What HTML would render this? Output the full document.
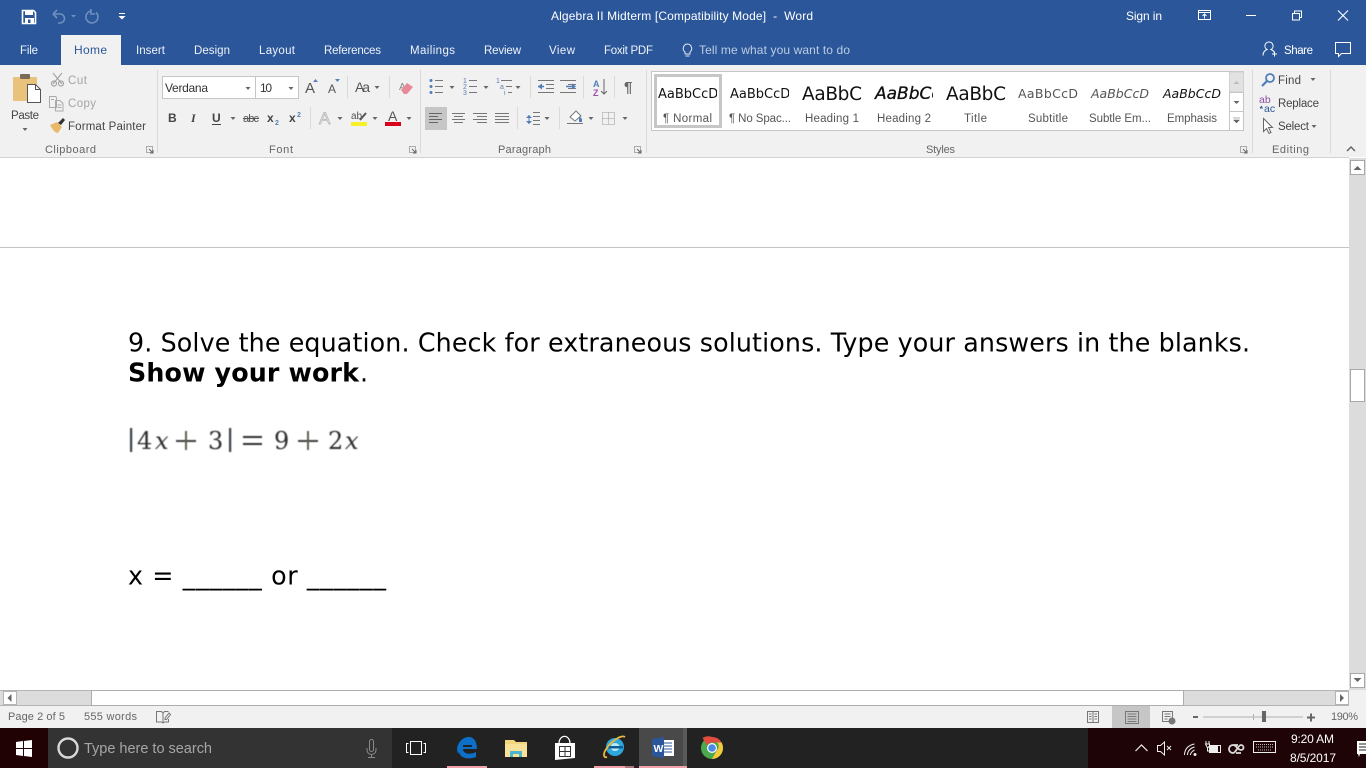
<!DOCTYPE html>
<html>
<head>
<meta charset="utf-8">
<title>Algebra II Midterm</title>
<style>
html,body{margin:0;padding:0;background:#fff;overflow:hidden}
svg{display:block;position:absolute;left:0;top:0}
text{font-family:"Liberation Sans",sans-serif;font-size:12px;white-space:pre}
.w{fill:#fff}
.tb{fill:#eef2f8;font-size:11.5px}
.r{fill:#444;font-size:11.5px}
.g{fill:#a5a5a5;font-size:11.5px}
.l{fill:#666;font-size:11px}
.c{fill:#555;font-size:11.5px;text-anchor:start}
.d{font-family:"DejaVu Sans","Liberation Sans",sans-serif;font-size:25.33px;fill:#000}
.s{font-family:"DejaVu Sans","Liberation Sans",sans-serif;fill:#111}
.st{fill:#666;font-size:11px}
.m{font-family:"DejaVu Serif","Liberation Serif",serif;font-size:24px;fill:#2e2e2e}
.mi{font-family:"DejaVu Serif","Liberation Serif",serif;font-size:24px;font-style:italic;fill:#2e2e2e}
</style>
</head>
<body>
<svg width="1366" height="768" viewBox="0 0 1366 768" xmlns="http://www.w3.org/2000/svg">
<defs>
<filter id="b" x="-5%" y="-20%" width="110%" height="140%"><feGaussianBlur stdDeviation="0.5"/></filter>
<g id="dd"><path d="M-2.5 0h5L0 3z" fill="#666"/></g>
<g id="dl"><path d="M1.500 1.500h6v6h-6z" fill="none" stroke="#aaa"/><path d="M4 4l3.500 3.500M8 5v3H5" fill="none" stroke="#666"/></g>
<clipPath id="c1"><rect x="656" y="80" width="61" height="26"/></clipPath>
<clipPath id="c2"><rect x="728" y="80" width="61" height="26"/></clipPath>
<clipPath id="c3"><rect x="872" y="80" width="61" height="26"/></clipPath>
<clipPath id="c4"><rect x="1089" y="80" width="60" height="26"/></clipPath>
<clipPath id="c5"><rect x="1161" y="80" width="60" height="26"/></clipPath>
</defs>

<!-- title bar -->
<rect width="1366" height="65" fill="#2b579a"/>
<g>
<path d="M22.5 10.5h11l2 2v11h-13z" fill="none" stroke="#fff" stroke-width="1.6"/>
<rect x="25" y="10" width="8" height="5" fill="#fff"/>
<rect x="25" y="18" width="9" height="5" fill="#fff"/>
<rect x="28" y="19.5" width="2.5" height="3.5" fill="#2b579a"/>
<path d="M53 14l4-4M53 14l4 4M53 14h7a4.5 4.5 0 0 1 0 9h-2" fill="none" stroke="#6f8fbf" stroke-width="1.6"/>
<path d="M71 15h5l-2.500 2.500z" fill="#6f8fbf"/>
<path d="M91 11a6 6 0 1 0 5 1.500M91 9v5h4" fill="none" stroke="#6f8fbf" stroke-width="1.600"/>
<rect x="119" y="13" width="6" height="1" fill="#fff"/>
<path d="M118.500 16h7l-3.500 3.500z" fill="#fff"/>
</g>
<text x="551" y="20" class="w" textLength="262">Algebra II Midterm [Compatibility Mode]  -  Word</text>
<text x="1126" y="20" class="w" textLength="36">Sign in</text>
<g fill="none" stroke="#fff">
<path d="M1198.500 10.500h12v9h-12zM1198.500 12.500h12"/>
<path d="M1204.500 18.500v-4M1202.500 16l2-2 2 2"/>
<path d="M1246 15.500h10"/>
<path d="M1292.500 13.500h7v6.500h-7zM1294.500 13v-2h7v6.500h-1.500"/>
<path d="M1338 10.500l10 10M1348 10.500l-10 10" stroke-width="1.100"/>
</g>

<!-- tabs -->
<rect x="61" y="35" width="60" height="30" fill="#f1f1f1"/>
<text x="20" y="54" class="tb" textLength="18">File</text>
<text x="74" y="54" fill="#2b579a" textLength="33">Home</text>
<text x="136" y="54" class="tb" textLength="29">Insert</text>
<text x="194" y="54" class="tb" textLength="36">Design</text>
<text x="259" y="54" class="tb" textLength="36">Layout</text>
<text x="324" y="54" class="tb" textLength="57">References</text>
<text x="410" y="54" class="tb" textLength="45">Mailings</text>
<text x="484" y="54" class="tb" textLength="37">Review</text>
<text x="549" y="54" class="tb" textLength="26">View</text>
<text x="604" y="54" class="tb" textLength="49">Foxit PDF</text>
<path d="M687 44a4.500 4.500 0 0 1 3 8v2h-5v-2a4.500 4.500 0 0 1 2-8zM685.500 56h4" fill="none" stroke="#dfe7f2"/>
<text x="699" y="54" fill="#bccce2" textLength="151">Tell me what you want to do</text>
<path d="M1269 42a4 4 0 0 1 2 7.500c2 .8 3 2 3.500 3.500M1269 42a4 4 0 0 0-2 7.500c-2.500 1-4 3-4 6M1272 54h5M1274.500 51.500v5" fill="none" stroke="#fff"/>
<text x="1284" y="54" class="w" style="font-size:11.500px" textLength="29">Share</text>
<path d="M1335.500 42.500h15v11h-9l-3 3v-3h-3z" fill="none" stroke="#fff"/>

<!-- ribbon -->
<rect y="65" width="1366" height="92" fill="#f1f1f1"/>
<rect y="157" width="1349" height="1" fill="#d2d2d2"/>
<g fill="#dadada">
<rect x="157" y="70" width="1" height="83"/><rect x="420" y="70" width="1" height="83"/><rect x="646" y="70" width="1" height="83"/><rect x="1252" y="70" width="1" height="83"/><rect x="1330" y="70" width="1" height="83"/>
<rect x="347" y="76" width="1" height="22"/><rect x="389" y="76" width="1" height="22"/><rect x="310" y="107" width="1" height="22"/>
<rect x="530" y="76" width="1" height="22"/><rect x="583" y="76" width="1" height="22"/><rect x="614" y="76" width="1" height="22"/>
<rect x="517" y="107" width="1" height="22"/><rect x="559" y="107" width="1" height="22"/>
</g>

<!-- clipboard -->
<rect x="13" y="77" width="24" height="24" rx="1" fill="#e9c27b"/>
<rect x="20" y="74" width="10" height="5" rx="1" fill="#7b6a55"/>
<path d="M27.500 84.500h8l5 5v13h-13z" fill="#fff" stroke="#555"/>
<path d="M35.500 84.500v5h5" fill="none" stroke="#555"/>
<text x="11" y="119" class="r" textLength="28">Paste</text>
<use href="#dd" x="25" y="128"/>
<g fill="none" stroke="#a5a5a5" stroke-width="1.200"><path d="M53 73l9 11M62 73l-9 11"/><circle cx="54" cy="83.500" r="2.500"/><circle cx="61" cy="83.500" r="2.500"/></g>
<text x="68" y="84" class="g" textLength="19">Cut</text>
<g fill="none" stroke="#aaa"><path d="M49.500 96.500h6l1 1v10h-7zM55.500 100.500h4.500l3 3v7.500h-7.500v-10.500zM51 99.500h3M57.500 105h4M57.500 107.500h4"/></g>
<text x="68" y="107" class="g" textLength="28">Copy</text>
<path d="M50 125l7-3 5 5-4 6c-3 0-6-4-8-8z" fill="#e9b96a"/>
<path d="M58 123l5-5 2 2-4 5z" fill="#333"/>
<text x="68" y="130" class="r" textLength="78">Format Painter</text>
<text x="45" y="153" class="l" textLength="51">Clipboard</text>
<use href="#dl" x="145" y="145"/>

<!-- font -->
<rect x="162.500" y="76.500" width="93" height="22" fill="#fff" stroke="#c6c6c6"/>
<rect x="255.500" y="76.500" width="43" height="22" fill="#fff" stroke="#c6c6c6"/>
<text x="165" y="92" fill="#333" textLength="43">Verdana</text>
<use href="#dd" x="248" y="87"/>
<text x="260" y="92" fill="#333" textLength="12">10</text>
<use href="#dd" x="291" y="87"/>
<text x="305" y="93" fill="#555" style="font-size:15px" textLength="11">A</text>
<path d="M313 82h5l-2.500-3z" fill="#5b7fb5"/>
<text x="328" y="93" fill="#555" style="font-size:12px" textLength="9">A</text>
<path d="M335 79h5l-2.500 3z" fill="#5b7fb5"/>
<text x="355" y="92" fill="#555" style="font-size:14px" textLength="15">Aa</text>
<use href="#dd" x="377" y="86"/>
<text x="399" y="90" fill="#888" style="font-size:10px">A</text>
<path d="M401 90l6-7 6 4-6 7h-3z" fill="#e88a96"/>
<text x="168" y="122" fill="#444" style="font-size:12px;font-weight:bold" textLength="8">B</text>
<text x="191" y="122" fill="#444" style="font-size:12px;font-style:italic;font-family:'Liberation Serif',serif;font-weight:bold" textLength="6">I</text>
<text x="212" y="122" fill="#444" style="font-size:12px;font-weight:bold" textLength="9">U</text>
<rect x="212" y="124" width="9" height="1" fill="#444"/>
<use href="#dd" x="233" y="117"/>
<text x="243" y="122" fill="#555" style="font-size:11px" textLength="16">abc</text>
<rect x="243" y="118" width="16" height="1" fill="#555"/>
<text x="267" y="122" fill="#444" style="font-size:12px;font-weight:bold">x</text>
<text x="275" y="125" fill="#5b7fb5" style="font-size:7px;font-weight:bold">2</text>
<text x="289" y="122" fill="#444" style="font-size:12px;font-weight:bold">x</text>
<text x="297" y="117" fill="#5b7fb5" style="font-size:7px;font-weight:bold">2</text>
<text x="319" y="124" fill="#e4e4e4" stroke="#b4b4b4" stroke-width=".7" style="font-size:17px" textLength="14">A</text>
<use href="#dd" x="340" y="117"/>
<text x="351" y="119" fill="#555" style="font-size:10px">ab</text>
<path d="M360 120l6-7" stroke="#555" stroke-width="2"/>
<rect x="351" y="122" width="16" height="4" fill="#f7f028"/>
<use href="#dd" x="375" y="117"/>
<text x="388" y="121" fill="#555" style="font-size:14px" textLength="11">A</text>
<rect x="385" y="122" width="16" height="4" fill="#d9001b"/>
<use href="#dd" x="409" y="117"/>
<text x="269" y="153" class="l" textLength="24">Font</text>
<use href="#dl" x="408" y="145"/>

<!-- paragraph -->
<g fill="none" stroke="#777">
<path d="M435 80.500h8M435 86.500h8M435 92.500h8"/>
<path d="M469 80.500h8M469 86.500h8M469 92.500h8"/>
<path d="M501 80.500h11M506 86.500h6M508 92.500h4"/>
<path d="M538 80.500h16M546 84.500h8M546 88.500h8M538 92.500h16M560 80.500h16M568 84.500h8M568 88.500h8M560 92.500h16"/>
<path d="M452 113.500h13M454 116.500h9M452 119.500h13M454 122.500h9M473 113.500h14M477 116.500h10M473 119.500h14M477 122.500h10M495 113.500h14M495 116.500h14M495 119.500h14M495 122.500h14"/>
<path d="M533 112.500h7M533 116.500h7M533 120.500h7M533 124.500h7"/>
<path d="M602.500 112.500h12v12h-12zM608.500 112.500v12M602.500 118.500h12" stroke="#999" stroke-dasharray="1 1"/>
</g>
<rect x="425" y="107" width="22" height="23" fill="#c6c6c6"/>
<path d="M429 113.500h13M429 116.500h9M429 119.500h13M429 122.500h9" fill="none" stroke="#666"/>
<g fill="#4f7dba"><circle cx="431" cy="80.500" r="1.500"/><circle cx="431" cy="86.500" r="1.500"/><circle cx="431" cy="92.500" r="1.500"/>
<path d="M538 86.500l4-3v6zM576 86.500l-4-3v6z"/>
<path d="M529 115l-3 3h6zM529 124l-3-3h6z"/>
<rect x="528.500" y="115" width="1" height="9"/></g>
<path d="M538 86.500h6M566 86.500h6" stroke="#4f7dba" stroke-width="1.500"/>
<text x="463" y="83" fill="#5b7fb5" style="font-size:7px">1</text><text x="463" y="89" fill="#5b7fb5" style="font-size:7px">2</text><text x="463" y="95" fill="#5b7fb5" style="font-size:7px">3</text><text x="496" y="83" fill="#5b7fb5" style="font-size:7px">1</text><text x="500" y="89" fill="#5b7fb5" style="font-size:7px">a</text><text x="504" y="95" fill="#5b7fb5" style="font-size:7px">i</text>
<use href="#dd" x="452" y="86"/><use href="#dd" x="486" y="86"/><use href="#dd" x="518" y="86"/>
<text x="593" y="87" fill="#4f7dba" style="font-size:9px;font-weight:bold">A</text>
<text x="593" y="96" fill="#a04fa8" style="font-size:9px;font-weight:bold">Z</text>
<path d="M604 79v15M601 91l3 3 3-3" fill="none" stroke="#666"/>
<text x="624" y="92" fill="#666" style="font-size:15px;font-weight:bold" textLength="10">¶</text>
<use href="#dd" x="547" y="117"/>
<path d="M570 117l6-6 5 5-6 5zM567 123.500h16" fill="#fff" stroke="#777"/>
<path d="M579 116l3 3v3h-3z" fill="#4f7dba"/>
<use href="#dd" x="591" y="117"/><use href="#dd" x="625" y="117"/>
<text x="498" y="153" class="l" textLength="53">Paragraph</text>
<use href="#dl" x="633" y="145"/>

<!-- styles -->
<rect x="651.500" y="71.500" width="592" height="59" fill="#fff" stroke="#c6c6c6"/>
<rect x="655.500" y="75.500" width="65" height="51" fill="#fff" stroke="#c6c6c6" stroke-width="3"/>
<text x="658" y="98" class="s" style="font-size:13px" clip-path="url(#c1)">AaBbCcDc</text>
<text x="730" y="98" class="s" style="font-size:13px" clip-path="url(#c2)">AaBbCcDc</text>
<text x="802" y="100" class="s" style="font-size:18.500px" textLength="60">AaBbC</text>
<text x="875" y="99" class="s" style="font-size:17px;font-style:italic" stroke="#111" stroke-width=".3" clip-path="url(#c3)">AaBbCc</text>
<text x="946" y="100" class="s" style="font-size:18.500px" textLength="60">AaBbC</text>
<text x="1018" y="98" class="s" style="font-size:12.500px;fill:#555" textLength="60">AaBbCcD</text>
<text x="1091" y="98" class="s" style="font-size:12.500px;font-style:italic;fill:#555" clip-path="url(#c4)">AaBbCcDc</text>
<text x="1163" y="98" class="s" style="font-size:12.500px;font-style:italic" clip-path="url(#c5)">AaBbCcDc</text>
<text x="663" y="122" class="c" textLength="49">¶ Normal</text>
<text x="729" y="122" class="c" textLength="62">¶ No Spac...</text>
<text x="805" y="122" class="c" textLength="54">Heading 1</text>
<text x="877" y="122" class="c" textLength="54">Heading 2</text>
<text x="964" y="122" class="c" textLength="23">Title</text>
<text x="1028" y="122" class="c" textLength="40">Subtitle</text>
<text x="1089" y="122" class="c" textLength="62">Subtle Em...</text>
<text x="1167" y="122" class="c" textLength="50">Emphasis</text>
<rect x="1229.500" y="72" width="14" height="20" fill="#e2e2e2" stroke="#d0d0d0"/>
<path d="M1233.500 84h6l-3-3z" fill="#bbb"/>
<rect x="1229.500" y="92.500" width="14" height="19" fill="#fff" stroke="#c6c6c6"/>
<path d="M1233.500 101h6l-3 3z" fill="#666"/>
<rect x="1229.500" y="111.500" width="14" height="19" fill="#fff" stroke="#c6c6c6"/>
<path d="M1233 118h7M1233.500 120h6l-3 3z" fill="#666" stroke="#666" stroke-width=".5"/>
<text x="926" y="153" class="l" textLength="29">Styles</text>
<use href="#dl" x="1239" y="145"/>

<!-- editing -->
<circle cx="1270" cy="78" r="4" fill="none" stroke="#4f7dba" stroke-width="1.800"/>
<path d="M1267 81l-5 5" stroke="#4f7dba" stroke-width="2.200"/>
<text x="1278" y="84" class="r" textLength="23">Find</text>
<use href="#dd" x="1313" y="78"/>
<text x="1259" y="103" fill="#8a4fa0" style="font-size:10.500px">ab</text>
<text x="1264" y="112" fill="#2b579a" style="font-size:10.500px">ac</text>
<path d="M1260 108h3M1260 108l2-2" stroke="#2b579a" fill="none"/>
<text x="1278" y="107" class="r" textLength="41">Replace</text>
<path d="M1263.500 118.500v13l3-3 2.500 5 2-1-2.500-5h4z" fill="#fff" stroke="#666"/>
<text x="1278" y="130" class="r" textLength="31">Select</text>
<use href="#dd" x="1314" y="125"/>
<text x="1272" y="153" class="l" textLength="37">Editing</text>
<path d="M1347 151l4-4 4 4" fill="none" stroke="#666" stroke-width="1.500"/>

<!-- document -->
<rect y="158" width="1349" height="532" fill="#fff"/>
<rect y="247" width="1349" height="1" fill="#c4c4c4"/>
<text x="128" y="351.500" class="d" textLength="1122">9. Solve the equation. Check for extraneous solutions. Type your answers in the blanks.</text>
<text x="128" y="381.500" class="d" style="font-weight:bold" textLength="231">Show your work</text>
<text x="360" y="381.500" class="d">.</text>
<g filter="url(#b)">
<rect x="130" y="428" width="2.200" height="24" fill="#3a3f4a"/>
<text x="137" y="449" class="m">4</text>
<text x="155" y="449" class="mi">x</text>
<rect x="176" y="440" width="20" height="2" fill="#3c3c3c"/><rect x="185" y="431" width="2" height="19" fill="#5f5f50"/>
<text x="208" y="449" class="m">3</text>
<rect x="229" y="428" width="2.200" height="24" fill="#3a3f4a"/>
<rect x="243" y="436" width="19" height="2" fill="#2e2e2e"/><rect x="243" y="443" width="19" height="2" fill="#2e2e2e"/>
<text x="274" y="449" class="m">9</text>
<rect x="298" y="440" width="20" height="2" fill="#3c3c3c"/><rect x="307" y="431" width="2" height="19" fill="#5f5f50"/>
<text x="328" y="449" class="m">2</text>
<text x="345" y="449" class="mi">x</text>
</g>
<text x="128" y="584.500" class="d" textLength="258">x = ______ or ______</text>

<!-- vertical scrollbar -->
<rect x="1349" y="158" width="17" height="532" fill="#dcdcdc"/>
<rect x="1350.500" y="160.500" width="14" height="14" fill="#fff" stroke="#a8a8a8"/>
<path d="M1353.500 170h8l-4-4z" fill="#666"/>
<rect x="1350.500" y="369.500" width="14" height="32" fill="#fff" stroke="#a8a8a8"/>
<rect x="1350.500" y="673.500" width="14" height="14" fill="#fff" stroke="#a8a8a8"/>
<path d="M1353.500 678h8l-4 4z" fill="#666"/>

<!-- horizontal scrollbar -->
<rect y="690" width="1349" height="16" fill="#dcdcdc"/>
<rect y="690" width="1349" height="1" fill="#b4b4b4"/>
<rect y="705" width="1366" height="1" fill="#b4b4b4"/>
<rect x="1349" y="690" width="17" height="16" fill="#f1f1f1"/>
<rect x="3.500" y="691.500" width="13" height="13" fill="#fff" stroke="#b4b4b4"/>
<path d="M11.500 694l-4 4 4 4z" fill="#666"/>
<rect x="91.500" y="690.500" width="1092" height="15" fill="#fff" stroke="#adadad"/>
<rect x="1335.500" y="691.500" width="13" height="13" fill="#fff" stroke="#b4b4b4"/>
<path d="M1340 694l4 4-4 4z" fill="#666"/>

<!-- status bar -->
<rect y="706" width="1366" height="22" fill="#f1f1f1"/>
<text x="8" y="720" class="st" textLength="57">Page 2 of 5</text>
<text x="84" y="720" class="st" textLength="53">555 words</text>
<path d="M156.500 711.500h5l1.500 1.500v10l-1.500-1h-5zM163 713l1.500-1.500h4M163 723l1.500-1h4v-3" fill="none" stroke="#777"/>
<path d="M165 718l4-5 1.500 1.500-4 5h-1.500z" fill="none" stroke="#777"/>
<rect x="1112" y="706" width="38" height="22" fill="#c6c6c6"/>
<g fill="none" stroke="#777">
<path d="M1087.500 711.500h11v11h-11zM1093 711.500v11M1089 714h2.500M1089 716.500h2.500M1089 719h2.500M1094.500 714h2.500M1094.500 716.500h2.500M1094.500 719h2.500"/>
<path d="M1125.500 711.500h13v12h-13zM1127.500 714h9M1127.500 716.500h9M1127.500 719h9M1127.500 721.500h9"/>
<path d="M1162.500 711.500h10v10h-10zM1164.500 714h6M1164.500 716.500h6M1164.500 719h3"/>
</g>
<circle cx="1172" cy="721" r="3.500" fill="#777"/>
<rect x="1193" y="716" width="5" height="2" fill="#666"/>
<rect x="1203" y="716.500" width="100" height="1" fill="#b0b0b0"/>
<rect x="1253" y="714" width="1" height="6" fill="#b0b0b0"/>
<rect x="1262" y="711" width="4" height="11" fill="#666"/>
<path d="M1307 717.500h8M1311 713.500v8" stroke="#666" stroke-width="2"/>
<text x="1331" y="720" class="st" textLength="27">190%</text>

<!-- taskbar -->
<rect y="728" width="1366" height="40" fill="#222222"/>
<rect width="48" height="40" y="728" fill="#200205"/>
<rect x="48" y="728" width="344" height="40" fill="#333333"/>
<rect x="1088" y="728" width="278" height="40" fill="#1e0407"/>
<g fill="#fff">
<path d="M16 742l7-1v7h-7zM24 741l8-1v8h-8zM16 749h7v7l-7-1zM24 749h8v8l-8-1z"/>
</g>
<circle cx="68" cy="748" r="9.500" fill="none" stroke="#d8d8d8" stroke-width="2.400"/>
<text x="84" y="753" fill="#a6a6a6" style="font-size:14.500px" textLength="128">Type here to search</text>
<path d="M369.500 741.500a2 2 0 0 1 4 0v8a2 2 0 0 1-4 0zM367 748v2a4.500 4.500 0 0 0 9 0v-2M371.500 755v2M368 757.500h7" fill="none" stroke="#8a8a8a"/>
<path d="M410.500 741.500h11v13h-11zM408.500 743.500h-2v9h2M423.500 743.500h2v9h-2" fill="none" stroke="#fff"/>
<!-- edge -->
<path d="M457 749c1-8 7-12 12-12 5 0 8 5 8 12h-14c0 5 7 6 13 3v5c-8 3-16 1-17-5-1 2-1 3-2-3z" fill="#0c6fc8"/>
<rect x="463" y="745" width="9" height="2" fill="#222"/>
<!-- explorer -->
<path d="M505 740h9l2 2h11v15h-22z" fill="#f3d57c"/>
<rect x="505" y="744" width="22" height="13" fill="#f8e29a"/>
<path d="M510 757v-6h12v6h-3v-3h-6v3z" fill="#4cb5cf"/>
<!-- store -->
<path d="M555 743h20v15l-20 2z" fill="#fff"/>
<path d="M559 743a5 6 0 0 1 11 0" fill="none" stroke="#fff" stroke-width="1.200"/>
<path d="M559.500 746.500h11v10h-11zM565 746.500v10M559.500 751.500h11" fill="none" stroke="#333"/>
<!-- ie -->
<ellipse cx="615" cy="747" rx="9" ry="9" fill="#2ea6dc"/>
<ellipse cx="615" cy="747" rx="4.500" ry="4" fill="#bfe8f6"/>
<rect x="608" y="746" width="15" height="2.500" fill="#0d5e92"/>
<path d="M625 737c-4-3-16 6-20 14-2 4-1 7 2 6" fill="none" stroke="#e9b93f" stroke-width="1.800"/>
<!-- word -->
<rect x="639" y="728" width="44" height="40" fill="#494949"/>
<rect x="683" y="728" width="4" height="40" fill="#5a5a5a"/>
<rect x="660" y="740" width="14" height="16" fill="#fff"/>
<path d="M662 743h10M662 746h10M662 749h10M662 752h10" stroke="#2b579a"/>
<path d="M652 739l12-2v21l-12-2z" fill="#2b579a"/>
<text x="653.500" y="752" fill="#fff" style="font-size:10.500px;font-weight:bold">W</text>
<!-- chrome -->
<circle cx="712" cy="748" r="11" fill="#4aa94f"/>
<path d="M712 737a11 11 0 0 1 9.500 5.500H712a5.500 5.500 0 0 0-5 3l-4.500-7.500a11 11 0 0 1 9.500-1z" fill="#e24b3d"/>
<path d="M721.500 742.500a11 11 0 0 1-9.500 16.500l5-9a5 5 0 0 0 0-7.500z" fill="#f4c93b"/>
<circle cx="712" cy="748" r="5" fill="#fff"/>
<circle cx="712" cy="748" r="3.800" fill="#4d87e8"/>
<!-- underlines -->
<rect x="447" y="766" width="40" height="2" fill="#f2a0aa"/>
<rect x="594" y="766" width="31" height="2" fill="#f2a0aa"/>
<rect x="625" y="766" width="9" height="2" fill="#b0747c"/>
<rect x="639" y="766" width="48" height="2" fill="#f2a0aa"/>
<!-- tray -->
<g fill="none" stroke="#eee">
<path d="M1135.500 751l6-6 6 6" stroke-width="1.200"/>
<path d="M1157.500 745.500h3l4-3.500v13l-4-3.500h-3zM1167 746l4 4M1171 746l-4 4"/>
<path d="M1184.500 755c0-6 4-10 10-11M1187.500 755c0-4 3-7 7-8M1190.500 755c0-2 2-4 4-5"/>
<path d="M1209.500 745.500h11v7h-11z"/>
<path d="M1206 741v3M1209 741v3M1205.500 744h4v2l-2 2zM1207.500 748v3h3"/>
</g>
<rect x="1210" y="746" width="8" height="6" fill="#eee"/>
<circle cx="1195" cy="754.500" r="1.500" fill="#eee"/>
<path d="M1233 753a4 4 0 0 1 0-8c3 0 5 5 8 5a2.500 2.500 0 0 0 0-5c-3 0-5 8-8 8zM1241 753h-5M1233 745h5" fill="none" stroke="#ddd" stroke-width="1.800"/>
<rect x="1253.500" y="741.500" width="22" height="11" fill="none" stroke="#eee"/>
<path d="M1256 744.500h17M1256 747h17M1258 750h13" stroke="#bbb" stroke-dasharray="1 1"/>
<text x="1291" y="743" class="w" textLength="43">9:20 AM</text>
<text x="1290" y="762" class="w" textLength="46">8/5/2017</text>
<path d="M1357 741h9v13h-6l-1 3-1-3h-1z" fill="#fff"/>
<path d="M1359 744h7M1359 747h7M1359 750h7" stroke="#222"/>
</svg>
</body>
</html>
